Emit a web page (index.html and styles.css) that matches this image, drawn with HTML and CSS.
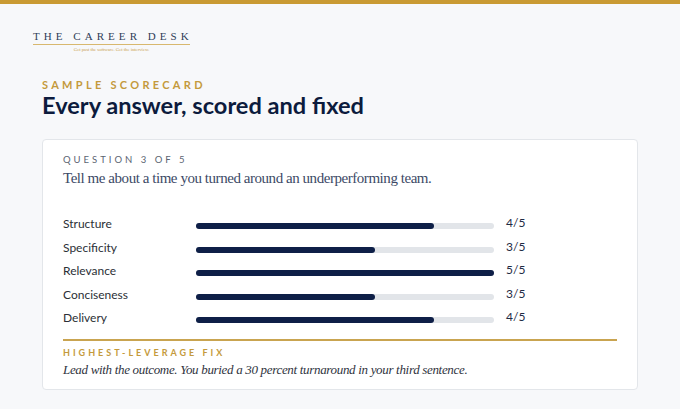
FILE: index.html
```html
<!DOCTYPE html>
<html lang="en">
<head>
<meta charset="utf-8">
<title>Sample Scorecard</title>
<link rel="stylesheet" href="styles.css">
</head>
<body>
<div class="topbar"></div>
<header class="brand">
  <div class="brand-name">THE CAREER DESK</div>
  <div class="brand-tag">Get past the software. Get the interview.</div>
</header>
<main class="page">
  <div class="eyebrow">SAMPLE SCORECARD</div>
  <h1 class="title">Every answer, scored and fixed</h1>
  <section class="card">
    <div class="q-label">QUESTION 3 OF 5</div>
    <p class="q-text">Tell me about a time you turned around an underperforming team.</p>
    <div class="scores">
      <div class="row"><span class="label">Structure</span><span class="track"><span class="fill" style="width:80%"></span></span><span class="score">4/5</span></div>
      <div class="row"><span class="label">Specificity</span><span class="track"><span class="fill" style="width:60%"></span></span><span class="score">3/5</span></div>
      <div class="row"><span class="label">Relevance</span><span class="track"><span class="fill" style="width:100%"></span></span><span class="score">5/5</span></div>
      <div class="row"><span class="label">Conciseness</span><span class="track"><span class="fill" style="width:60%"></span></span><span class="score">3/5</span></div>
      <div class="row"><span class="label">Delivery</span><span class="track"><span class="fill" style="width:80%"></span></span><span class="score">4/5</span></div>
    </div>
    <div class="fix">
      <div class="fix-label">HIGHEST-LEVERAGE FIX</div>
      <p class="fix-text">Lead with the outcome. You buried a 30 percent turnaround in your third sentence.</p>
    </div>
  </section>
</main>
</body>
</html>
```
FILE: styles.css
```css
* { box-sizing: border-box; }
html, body { margin: 0; padding: 0; }
body {
  background: #f7f8fa;
  font-family: Lato, "Liberation Sans", sans-serif;
  color: #1f2937;
  width: 680px;
  height: 409px;
  overflow: hidden;
}
.topbar { height: 4px; background: #c99a33; }
.brand {
  width: 157px;
  margin: 26px 0 0 33px;
  display: flex;
  flex-direction: column;
  align-items: center;
}
.brand-name {
  width: 100%;
  font-family: "Liberation Serif", serif;
  font-size: 11px;
  letter-spacing: 4.05px;
  color: #2f3d58;
  line-height: 12px;
  padding-bottom: 2px;
  border-bottom: 1px solid #d8b86e;
  white-space: nowrap;
}
.brand-tag {
  font-family: "Liberation Serif", serif;
  font-size: 4.7px;
  line-height: 6px;
  margin-top: 2px;
  color: #c9a14a;
  white-space: nowrap;
}
.page { padding: 25px 42px 0 42px; }
.eyebrow {
  font-size: 11px;
  font-weight: 700;
  letter-spacing: 3.3px;
  color: #c49a3c;
  line-height: 14px;
}
.title {
  margin: 0;
  font-size: 23.6px;
  line-height: 26px;
  font-weight: 700;
  color: #0c1b3d;
}
.card {
  margin-top: 21px;
  width: 596px;
  height: 251px;
  background: #fff;
  border: 1px solid #e3e6ea;
  border-radius: 4px;
  padding: 14px 20px 0 20px;
}
.q-label {
  font-size: 9.5px;
  letter-spacing: 3px;
  color: #5b6472;
  line-height: 12px;
}
.q-text {
  margin: 2px 0 0 0;
  font-family: "Liberation Serif", serif;
  font-size: 15px;
  letter-spacing: -0.45px;
  line-height: 20px;
  color: #3c4a66;
}
.scores {
  margin-top: 28px;
  display: flex;
  flex-direction: column;
  gap: 7.5px;
}
.row {
  display: grid;
  grid-template-columns: 133px 298px auto;
  align-items: center;
  height: 16px;
}
.label { font-size: 12px; color: #2b2f36; line-height: 16px; }
.track {
  height: 6px;
  background: #e2e5e9;
  border-radius: 3px;
  display: block;
  position: relative;
  top: 2px;
}
.fill {
  display: block;
  height: 100%;
  background: #0e1f47;
  border-radius: 3px;
}
.score {
  margin-left: 12px;
  font-size: 12px;
  color: #1f2b44;
  line-height: 16px;
  position: relative;
  top: -1px;
}
.fix {
  margin-top: 13px;
  border-top: 2px solid #c9a450;
  padding-top: 6px;
}
.fix-label {
  font-size: 9px;
  font-weight: 700;
  letter-spacing: 3px;
  color: #c49a3c;
  line-height: 12px;
}
.fix-text {
  margin: 2px 0 0 0;
  font-family: "Liberation Serif", serif;
  font-style: italic;
  font-size: 13px;
  letter-spacing: -0.32px;
  line-height: 18px;
  color: #2f3340;
}
```
